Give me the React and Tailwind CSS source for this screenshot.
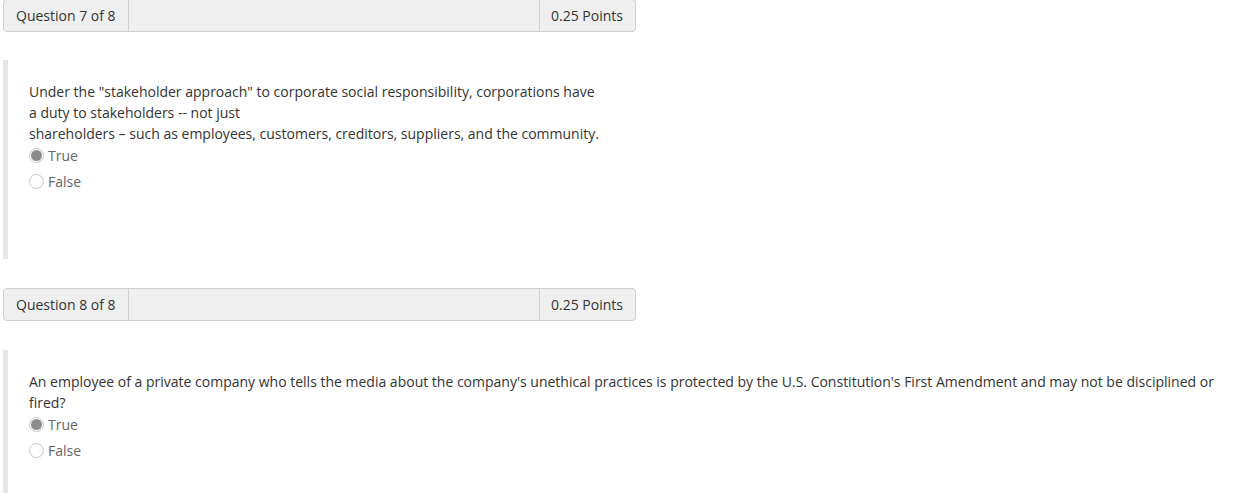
import React from 'react';

const font = { fontFamily: '"Open Sans", "Noto Sans", sans-serif' };

const Radio = ({ checked, label }) => (
  <label className="flex h-[26px] items-center gap-[4px] text-[14px] text-[#666]">
    <span className="flex h-[15px] w-[15px] items-center justify-center rounded-full border border-[#c8c8c8] bg-white">
      {checked && <span className="h-[11px] w-[11px] rounded-full bg-[#8c8c8c]" />}
    </span>
    <span>{label}</span>
  </label>
);

const Header = ({ n }) => (
  <div className="flex h-[33px] w-[633px] items-stretch rounded-[4px] border border-[#cfcfcf] bg-[#efefef] text-[14px] text-[#333]">
    <div className="flex w-[125px] items-center border-r border-[#cfcfcf] pl-[12px] pb-px">Question {n} of 8</div>
    <div className="flex-1" />
    <div className="flex w-[96px] items-center border-l border-[#cfcfcf] pl-[11px] pb-px">0.25 Points</div>
  </div>
);

const Block = ({ height, children }) => (
  <div className="border-l-[5px] border-[#e6e6e6] pl-[21px] pt-[21px] pr-[16px]" style={{ height }}>
    {children}
  </div>
);

export default function App() {
  return (
    <div className="min-h-screen bg-white pl-[3px]" style={font}>
      <div className="-mt-px">
        <Header n={7} />
      </div>
      <div className="mt-[28px]">
        <Block height={199}>
          <p className="text-[14px] leading-[21px] text-[#333]">
            Under the "stakeholder approach" to corporate social responsibility, corporations have
            <br />
            a duty to stakeholders -- not just
            <br />
            shareholders – such as employees, customers, creditors, suppliers, and the community.
          </p>
          <div className="mt-[-2px]">
            <Radio checked label="True" />
            <Radio label="False" />
          </div>
        </Block>
      </div>
      <div className="mt-[29px]">
        <Header n={8} />
      </div>
      <div className="mt-[29px]">
        <Block height={160}>
          <p className="text-[14px] leading-[21px] text-[#333]">
            An employee of a private company who tells the media about the company's unethical practices is protected by the U.S. Constitution's First Amendment and may not be disciplined or fired?
          </p>
          <div className="mt-[-2px]">
            <Radio checked label="True" />
            <Radio label="False" />
          </div>
        </Block>
      </div>
    </div>
  );
}
